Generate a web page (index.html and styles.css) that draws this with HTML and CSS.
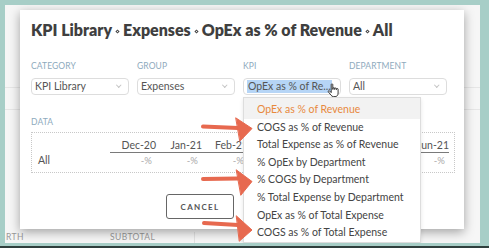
FILE: index.html
```html
<!DOCTYPE html>
<html lang="en">
<head>
    <meta charset="UTF-8">
    <meta name="viewport" content="width=device-width, initial-scale=1.0">
    <title>KPI Library</title>
    <link rel="stylesheet" href="styles.css">
</head>
<body>
    <div class="frame">
        <div class="page">
            <div class="bg-rows">
                <div class="bg-row"></div>
                <div class="bg-row"></div>
            </div>
            <div class="bg-head">
                <span class="bg-month">RTH</span>
                <span class="bg-sub">SUBTOTAL</span>
                <span class="bg-rest"></span>
            </div>

            <div class="modal">
                <h1 class="modal-title">KPI Library<i class="sep"></i>Expenses<i class="sep"></i>OpEx as % of Revenue<i class="sep"></i>All</h1>

                <div class="filters">
                    <div class="field">
                        <div class="label">Category</div>
                        <div class="select"><span>KPI Library</span><i class="chev"></i></div>
                    </div>
                    <div class="field">
                        <div class="label">Group</div>
                        <div class="select"><span>Expenses</span><i class="chev"></i></div>
                    </div>
                    <div class="field">
                        <div class="label">KPI</div>
                        <div class="select select-open">
                            <span class="selected-text">OpEx as % of Re...</span>
                            <svg class="cursor" width="13" height="15" viewBox="0 0 13 15">
                                <path d="M4.2 1.6c0-1 1.6-1 1.6 0V6.4h.3V5.3c0-.9 1.5-.9 1.5 0v1.1h.3v-.8c0-.9 1.5-.9 1.5 0v1h.2v-.4c0-.9 1.5-.9 1.5 0V10c0 2.3-1.2 3.6-3 3.6H6.4c-1 0-1.7-.5-2.4-1.4L1.4 8.9c-.6-.8.4-1.7 1.1-1L4.2 9.6Z" fill="#fff" stroke="#222" stroke-width="0.9" stroke-linejoin="round"/>
                            </svg>
                        </div>
                        <ul class="dropdown">
                            <li class="active">OpEx as % of Revenue</li>
                            <li>COGS as % of Revenue</li>
                            <li>Total Expense as % of Revenue</li>
                            <li>% OpEx by Department</li>
                            <li>% COGS by Department</li>
                            <li>% Total Expense by Department</li>
                            <li>OpEx as % of Total Expense</li>
                            <li>COGS as % of Total Expense</li>
                        </ul>
                    </div>
                    <div class="field">
                        <div class="label">Department</div>
                        <div class="select"><span>All</span><i class="chev"></i></div>
                    </div>
                </div>

                <div class="label data-label">Data</div>
                <div class="data-box">
                    <div class="cell"></div>
                    <div class="cell head">Dec-20</div>
                    <div class="cell head">Jan-21</div>
                    <div class="cell head">Feb-21</div>
                    <div class="cell head">Mar-21</div>
                    <div class="cell head">Apr-21</div>
                    <div class="cell head">May-21</div>
                    <div class="cell head">Jun-21</div>

                    <div class="cell row-name">All</div>
                    <div class="cell value">-%</div>
                    <div class="cell value">-%</div>
                    <div class="cell value">-%</div>
                    <div class="cell value">-%</div>
                    <div class="cell value">-%</div>
                    <div class="cell value">-%</div>
                    <div class="cell value">-%</div>
                </div>

                <div class="actions">
                    <button class="btn">Cancel</button>
                </div>
            </div>
        </div>
    </div>
    <div class="baseline"></div>

    <!-- annotation arrows drawn over the screenshot -->
    <svg class="arrows" width="489" height="248" viewBox="0 0 489 248">
        <g fill="#e7694f" stroke="#e7694f" stroke-linecap="round">
            <path d="M203 126.5 L238 128" stroke-width="4" fill="none"/>
            <path d="M236 118 L252 128.5 L240 141 Z" stroke-width="1" stroke-linejoin="round"/>
            <path d="M203 179 L238 178.5" stroke-width="4" fill="none"/>
            <path d="M236.5 170 L252 181.5 L241 195 Z" stroke-width="1" stroke-linejoin="round"/>
            <path d="M204 223 L238 225" stroke-width="4" fill="none"/>
            <path d="M236.5 216 L252 230 L239.5 241 Z" stroke-width="1" stroke-linejoin="round"/>
        </g>
    </svg>
</body>
</html>
```

FILE: styles.css
```css
:root {
    --teal: #a7cec7;
    --page: #f6f6f6;
    --text: #4a4a4a;
    --muted: #aaaaaa;
    --label: #8eaabd;
    --border: #dddddd;
    --orange: #e8893d;
    --arrow: #e7694f;
}

* {
    margin: 0;
    padding: 0;
    box-sizing: border-box;
}

body {
    font-family: Lato, "Open Sans", sans-serif;
    width: 489px;
    height: 248px;
    overflow: hidden;
    position: relative;
    background-color: var(--teal);
    color: var(--text);
}

.frame {
    height: 246px;
    padding: 5px 9px 3px 5px;
    background-color: var(--teal);
}

.baseline {
    height: 2px;
    background-color: #2f3f3d;
}

.page {
    position: relative;
    height: 100%;
    background-color: var(--page);
    overflow: hidden;
    display: flex;
    flex-direction: column;
}

.bg-rows {
    flex: 1;
    padding-top: 61px;
}

.bg-row {
    height: 22px;
    border-bottom: 1px solid #e6e6e6;
}

.bg-head {
    display: flex;
    height: 16px;
    font-size: 8.5px;
    color: #999;
    letter-spacing: 0.4px;
    padding-top: 5px;
}

.bg-month {
    width: 105px;
    padding-left: 1px;
}

.bg-sub {
    width: 85px;
    border-right: 1px solid #e2e2e2;
}

/* modal */
.modal {
    position: absolute;
    left: 15px;
    top: 5px;
    width: 444px;
    height: 219px;
    background-color: #ffffff;
    box-shadow: 0 3px 10px rgba(0, 0, 0, 0.35);
    padding: 9px 10px 0 11px;
}

.modal-title {
    font-size: 16px;
    font-weight: 800;
    line-height: 22px;
    color: #3f3f3f;
    white-space: nowrap;
}

.sep {
    display: inline-block;
    width: 3px;
    height: 3px;
    border: 1.5px solid #444;
    transform: rotate(45deg);
    margin: 0 4px 1px 4px;
    vertical-align: middle;
}

.label {
    font-size: 8.5px;
    line-height: 11px;
    text-transform: uppercase;
    color: var(--label);
    letter-spacing: 0.1px;
}

.filters {
    display: grid;
    grid-template-columns: repeat(4, 98px);
    column-gap: 8px;
    margin-top: 20px;
}

.field {
    position: relative;
}

.field .label {
    margin-bottom: 6px;
}

.select {
    position: relative;
    height: 17px;
    border: 1px solid var(--border);
    border-radius: 4px;
    font-size: 10.5px;
    line-height: 15px;
    padding-left: 3px;
    color: #555;
    display: flex;
    align-items: center;
}

.chev {
    position: absolute;
    right: 8px;
    top: 4px;
    width: 3.5px;
    height: 3.5px;
    border-right: 1px solid #c4c4c4;
    border-bottom: 1px solid #c4c4c4;
    transform: rotate(45deg);
}

.selected-text {
    background-color: #b6d5f6;
    padding: 0 1px;
    line-height: 13px;
}

.cursor {
    position: absolute;
    right: 0;
    top: 4px;
}

.dropdown {
    position: absolute;
    left: 0;
    top: 36px;
    width: 178px;
    list-style: none;
    background-color: #ffffff;
    border: 1px solid var(--border);
    box-shadow: 0 2px 4px rgba(0, 0, 0, 0.1);
    z-index: 2;
}

.dropdown li {
    font-size: 10.5px;
    line-height: 17.6px;
    padding-left: 13px;
    color: #444;
    white-space: nowrap;
}

.dropdown li.active {
    padding-top: 3px;
    background-color: #f2f2f2;
    color: var(--orange);
}

/* data table */
.data-label {
    margin-top: 22px;
}

.data-box {
    margin-top: 4px;
    width: 424px;
    border: 1px dotted #c8c8c8;
    padding: 5px 5px 5px 6px;
    display: grid;
    grid-template-columns: 72px 46px 46px 46px repeat(4, 50.25px);
}

.cell {
    font-size: 10.5px;
    text-align: right;
}

.head {
    line-height: 14px;
    color: #555;
    border-bottom: 1.5px solid #7a7a7a;
}

.row-name {
    text-align: left;
    line-height: 13px;
    padding-top: 1px;
    color: #555;
}

.value {
    line-height: 13px;
    padding-top: 1px;
    padding-right: 4px;
    font-size: 9.5px;
    color: var(--muted);
}

/* buttons */
.actions {
    display: flex;
    margin-top: 21px;
    padding-left: 135px;
}

.btn {
    width: 68px;
    height: 25px;
    border: 1.5px solid #666;
    border-radius: 3px;
    background: #ffffff;
    font-family: Lato, "Open Sans", sans-serif;
    font-size: 8px;
    font-weight: 700;
    letter-spacing: 1.3px;
    text-transform: uppercase;
    color: #555;
}

.arrows {
    position: absolute;
    left: 0;
    top: 0;
    z-index: 10;
    pointer-events: none;
}
```
